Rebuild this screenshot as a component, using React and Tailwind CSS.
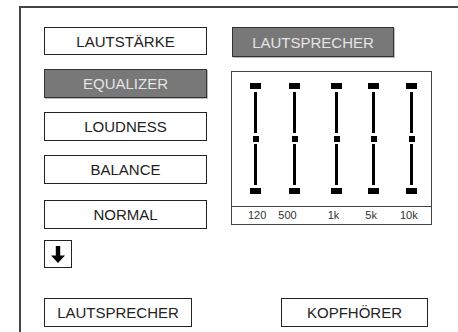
import React from "react";

const font = { fontFamily: '"Liberation Sans", Arial, sans-serif' };

function Btn({ children, active, className = "" }) {
  return (
    <div
      className={
        "flex items-center justify-center text-[15px] leading-none " +
        (active
          ? "bg-[#787878] text-[#e4e4e4] border border-[#333] shadow-[1px_1px_0_#bbb] "
          : "bg-white text-[#222] border border-[#222] ") +
        className
      }
    >
      {children}
    </div>
  );
}

function Slider({ ml }) {
  return (
    <div className={"flex flex-col items-center w-[11px] " + ml}>
      <div className="w-[11px] h-[6px] bg-black mt-[11px]" />
      <div className="w-[3px] h-[41px] bg-black mt-[3px]" />
      <div className="w-[6px] h-[6px] bg-black mt-[3px]" />
      <div className="w-[3px] h-[41px] bg-black mt-[2px]" />
      <div className="w-[11px] h-[6px] bg-black mt-[3px]" />
    </div>
  );
}

export default function App() {
  return (
    <div className="w-[458px] h-[332px] bg-white overflow-hidden" style={font}>
      <div className="ml-[19px] mt-[6px] w-[460px] h-[340px] border-l-2 border-t-2 border-[#444] pl-[23px] pt-[19px]">
        <div className="flex">
          <div className="flex flex-col w-[163px]">
            <Btn className="h-[28px]">LAUTSTÄRKE</Btn>
            <Btn active className="h-[29px] mt-[14px]">EQUALIZER</Btn>
            <Btn className="h-[29px] mt-[14px]">LOUDNESS</Btn>
            <Btn className="h-[29px] mt-[14px]">BALANCE</Btn>
            <Btn className="h-[29px] mt-[16px]">NORMAL</Btn>
            <div className="w-[28px] h-[28px] mt-[11px] border border-[#222] flex items-center justify-center">
              <svg width="16" height="19" viewBox="0 0 16 19">
                <path d="M5.8 1h4.4v9.5h4.8L8 18 1 10.5h4.8z" fill="#000" />
              </svg>
            </div>
          </div>
          <div className="flex flex-col ml-[25px]">
            <Btn active className="w-[162px] h-[30px]">LAUTSPRECHER</Btn>
            <div className="w-[201px] h-[154px] mt-[14px] -ml-[1px] border border-[#444] flex flex-col">
              <div className="flex h-[134px]">
                <Slider ml="ml-[18px]" />
                <Slider ml="ml-[28px]" />
                <Slider ml="ml-[31px]" />
                <Slider ml="ml-[26px]" />
                <Slider ml="ml-[27px]" />
              </div>
              <div className="border-t border-[#444] flex-1 flex items-center text-[11px] text-[#333] leading-none">
                <span className="ml-[16px]">120</span>
                <span className="ml-[12px]">500</span>
                <span className="ml-[31px]">1k</span>
                <span className="ml-[26px]">5k</span>
                <span className="ml-[23px]">10k</span>
              </div>
            </div>
          </div>
        </div>
        <div className="flex mt-[30px]">
          <Btn className="w-[148px] h-[29px]">LAUTSPRECHER</Btn>
          <Btn className="w-[147px] h-[29px] ml-[89px]">KOPFHÖRER</Btn>
        </div>
      </div>
    </div>
  );
}
